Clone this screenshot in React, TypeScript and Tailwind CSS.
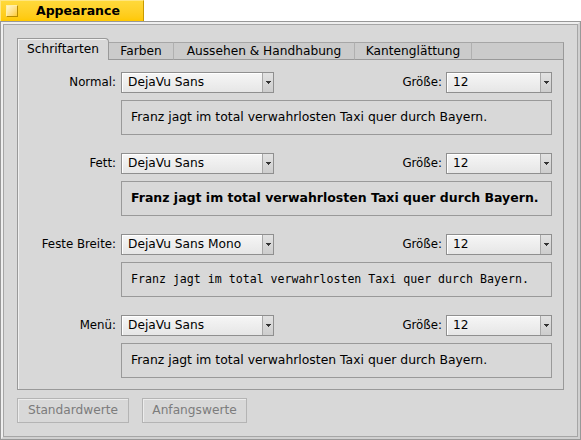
const sample = "Franz jagt im total verwahrlosten Taxi quer durch Bayern.";

const sections = [
  { label: "Normal:", family: "DejaVu Sans", preview: "font-['DejaVu_Sans',sans-serif] text-[12.4px]" },
  { label: "Fett:", family: "DejaVu Sans", preview: "font-['DejaVu_Sans',sans-serif] font-bold text-[12.5px]" },
  { label: "Feste Breite:", family: "DejaVu Sans Mono", preview: "font-['DejaVu_Sans_Mono',monospace] text-[11.6px]" },
  { label: "Menü:", family: "DejaVu Sans", preview: "font-['DejaVu_Sans',sans-serif] text-[12.4px]" },
];

const tabs = [
  { name: "Farben", w: "w-[65px]" },
  { name: "Aussehen & Handhabung", w: "w-[181px]" },
  { name: "Kantenglättung", w: "w-[117px]" },
];

const MenuField = ({ value, width }: { value: string; width: string }) => (
  <div
    className={`${width} h-[21px] flex border border-[#8f8f8f] bg-gradient-to-b from-[#f6f6f6] to-[#e6e6e6] shadow-[inset_1px_1px_0_#ffffff]`}
  >
    <div className="flex-1 pl-[6px] leading-[19px] text-black truncate">{value}</div>
    <div className="w-[11px] border-l border-[#a8a8a8] bg-gradient-to-b from-[#e2e2e2] to-[#cdcdcd] flex items-center justify-center">
      <svg width="5" height="3" viewBox="0 0 5 3">
        <path d="M0 0h5v1H0zM1 1h3v1H1zM2 2h1v1H2z" fill="#333" />
      </svg>
    </div>
  </div>
);

const App = () => {
  return (
    <div className="w-[581px] h-[440px] bg-white font-['DejaVu_Sans',sans-serif] text-[12.2px] text-black overflow-hidden">
      {/* title tab */}
      <div className="w-[144px] h-[21px] flex items-center border-t border-l border-r border-t-[#ffe680] border-l-[#ffe680] border-r-[#c89a00] bg-gradient-to-b from-[#ffd93a] to-[#ffc800]">
        <div className="ml-[5px] w-[12px] h-[12px] border border-t-[#fff0a8] border-l-[#fff0a8] border-r-[#b88c00] border-b-[#b88c00] bg-gradient-to-br from-[#fff6cc] to-[#ffcc22]" />
        <div className="ml-[18px] font-bold text-[12.5px] leading-none">Appearance</div>
      </div>

      {/* window frame */}
      <div className="h-[419px] border border-[#989898]">
        <div className="h-full border-2 border-t-[#efefef] border-l-[#efefef] border-r-[#d0d0d0] border-b-[#d0d0d0]">
          <div className="h-full border border-[#a6a6a6] bg-[#d8d8d8] px-[13px] pt-[13px]">
            {/* tab bar */}
            <div className="flex items-end h-[22px]">
              <div className="w-[92px] h-[22px] border-t border-l border-r border-[#999] rounded-tr-[4px] bg-[#d8d8d8] shadow-[inset_1px_1px_0_#f2f2f2] flex items-center justify-center pb-[1px]">
                Schriftarten
              </div>
              {tabs.map((t) => (
                <div
                  key={t.name}
                  className={`${t.w} h-[18px] border-t border-r border-b border-t-[#a6a6a6] border-r-[#b0b0b0] border-b-[#999] bg-[#cbcbcb] flex items-center justify-center`}
                >
                  {t.name}
                </div>
              ))}
              <div className="flex-1 h-[18px] border-t border-r border-b border-t-[#a6a6a6] border-r-[#999] border-b-[#999] bg-[#cbcbcb]" />
            </div>

            {/* tab content */}
            <div className="border-l border-r border-b border-[#999] shadow-[inset_1px_0_0_#f0f0f0] pt-[12px] pb-[11px] flex flex-col gap-[18px]">
              {sections.map((s) => (
                <div key={s.label} className="flex flex-col gap-[7px]">
                  <div className="flex items-center h-[21px]">
                    <div className="w-[103px] pr-[5px] text-right text-[11.8px]">{s.label}</div>
                    <MenuField value={s.family} width="w-[153px]" />
                    <div className="flex-1 text-right pr-[4px] text-[11.8px]">Größe:</div>
                    <MenuField value="12" width="w-[106px]" />
                    <div className="w-[11px]" />
                  </div>
                  <div className="ml-[103px] mr-[11px] h-[35px] border border-[#999] flex items-center pl-[9px]">
                    <span className={s.preview}>{sample}</span>
                  </div>
                </div>
              ))}
            </div>

            {/* buttons */}
            <div className="flex gap-[13px] mt-[8px]">
              <button className="w-[112px] h-[25px] border border-[#b4b4b4] bg-[#d8d8d8] shadow-[inset_1px_1px_0_#ececec] text-[#7c7c7c]">
                Standardwerte
              </button>
              <button className="w-[105px] h-[25px] border border-[#b4b4b4] bg-[#d8d8d8] shadow-[inset_1px_1px_0_#ececec] text-[#7c7c7c]">
                Anfangswerte
              </button>
            </div>
          </div>
        </div>
      </div>
    </div>
  );
};

export default App;
